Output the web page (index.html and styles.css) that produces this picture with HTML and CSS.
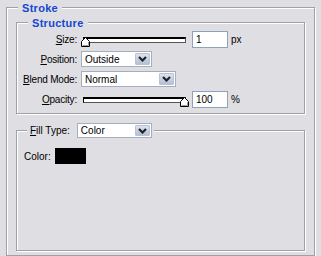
FILE: index.html
```html
<!DOCTYPE html>
<html lang="en">
  <head>
    <meta charset="UTF-8" />
    <title>Stroke</title>
    <link rel="stylesheet" href="styles.css">
  </head>
  <body>
    <div class="group outer">
      <div class="legend title">Stroke</div>

      <div class="group structure">
        <div class="legend title">Structure</div>
        <div class="rows">
          <span class="label"><u>S</u>ize:</span>
          <div class="control">
            <div class="slider">
              <div class="track"></div>
              <svg class="thumb" style="left: 0px" width="9" height="10" viewBox="0 0 9 10">
                <path d="M0.5 9.5V4.5L4.5 0.5L8.5 4.5V9.5Z" fill="#fff" stroke="#000" />
                <path d="M1.5 8.5H7.5V5" fill="none" stroke="#9a9aa2" />
              </svg>
            </div>
            <input class="num" type="text" value="1" />
            <span class="unit">px</span>
          </div>

          <span class="label"><u>P</u>osition:</span>
          <div class="control">
            <div class="select position">
              <span class="value">Outside</span>
              <span class="arrow">
                <svg width="9" height="6" viewBox="0 0 9 6"><path d="M1 1L4.5 4.5L8 1" fill="none" stroke="#222228" stroke-width="2.2" /></svg>
              </span>
            </div>
          </div>

          <span class="label"><u>B</u>lend Mode:</span>
          <div class="control">
            <div class="select blend">
              <span class="value">Normal</span>
              <span class="arrow">
                <svg width="9" height="6" viewBox="0 0 9 6"><path d="M1 1L4.5 4.5L8 1" fill="none" stroke="#222228" stroke-width="2.2" /></svg>
              </span>
            </div>
          </div>

          <span class="label"><u>O</u>pacity:</span>
          <div class="control">
            <div class="slider">
              <div class="track"></div>
              <svg class="thumb" style="left: 99px" width="9" height="10" viewBox="0 0 9 10">
                <path d="M0.5 9.5V4.5L4.5 0.5L8.5 4.5V9.5Z" fill="#fff" stroke="#000" />
                <path d="M1.5 8.5H7.5V5" fill="none" stroke="#9a9aa2" />
              </svg>
            </div>
            <input class="num" type="text" value="100" />
            <span class="unit">%</span>
          </div>
        </div>
      </div>

      <div class="group fill">
        <div class="legend fill-legend">
          <span class="label"><u>F</u>ill Type:</span>
          <div class="select filltype">
            <span class="value">Color</span>
            <span class="arrow">
              <svg width="9" height="6" viewBox="0 0 9 6"><path d="M1 1L4.5 4.5L8 1" fill="none" stroke="#222228" stroke-width="2.2" /></svg>
            </span>
          </div>
        </div>
        <div class="color-row">
          <span>Color:</span>
          <span class="swatch"></span>
        </div>
      </div>
    </div>
  </body>
</html>
```

FILE: styles.css
```css
body {
  margin: 0;
  background: #dfdee3;
  font-family: "Liberation Sans", Arial, sans-serif;
  font-size: 10px;
  color: #000;
}
.group {
  box-sizing: border-box;
  border: 1px solid #a0a0a8;
  box-shadow: inset 1px 1px 0 #fff, 1px 1px 0 #fff;
}
.outer {
  margin: 7px 0 0 6px;
  width: 309px;
  height: 249px;
}
.legend {
  width: fit-content;
  background: #dfdee3;
}
.title {
  margin: -6px 0 0 11px;
  padding: 0 4px;
  line-height: 12px;
  font-size: 11px;
  font-weight: bold;
  letter-spacing: 0.3px;
  color: #1248d2;
}
.structure {
  margin: 8px 9px 0 9px;
}
.rows {
  display: grid;
  grid-template-columns: 60px auto;
  grid-auto-rows: 20px;
  column-gap: 4px;
  align-items: center;
  padding-bottom: 4px;
}
.rows .label {
  text-align: right;
  letter-spacing: -0.2px;
}
.control {
  display: flex;
  align-items: center;
  height: 20px;
}
.slider {
  position: relative;
  width: 107px;
  height: 20px;
}
.track {
  box-sizing: border-box;
  height: 6px;
  margin: 8px 2px 0 2px;
  background: #fff;
  border: 1px solid #000;
  border-top-width: 2px;
  border-right-color: #555;
  border-bottom-color: #555;
}
.thumb {
  position: absolute;
  top: 8px;
}
.num {
  box-sizing: border-box;
  width: 36px;
  height: 17px;
  margin: 0 0 0 4px;
  padding: 0 3px;
  border: 1px solid #8fa2bd;
  background: #fff;
  font-family: inherit;
  font-size: 10px;
  color: #000;
}
.unit {
  margin-left: 3px;
}
.select {
  box-sizing: border-box;
  display: flex;
  align-items: center;
  height: 16px;
  border: 1px solid #a3aebe;
  background: #fff;
}
.select .value {
  padding-left: 3px;
}
.select .arrow {
  box-sizing: border-box;
  display: flex;
  align-items: center;
  justify-content: center;
  margin: 1px 1px 1px auto;
  width: 15px;
  align-self: stretch;
  border: 1px solid #b8c3d6;
  border-radius: 1px;
  background: linear-gradient(#dde3ee, #b4bfd3);
}
.position {
  width: 71px;
}
.blend {
  width: 95px;
}
.fill {
  margin: 16px 9px 0 9px;
  height: 121px;
}
.fill-legend {
  display: flex;
  align-items: center;
  margin: -8px 0 0 10px;
  padding: 0 2px 0 3px;
}
.fill-legend .label {
  margin-right: 7px;
}
.filltype {
  width: 75px;
  height: 15px;
}
.color-row {
  display: flex;
  align-items: center;
  gap: 4px;
  margin-top: 10px;
  padding-left: 7px;
}
.swatch {
  width: 31px;
  height: 16px;
  background: #000;
}
```
